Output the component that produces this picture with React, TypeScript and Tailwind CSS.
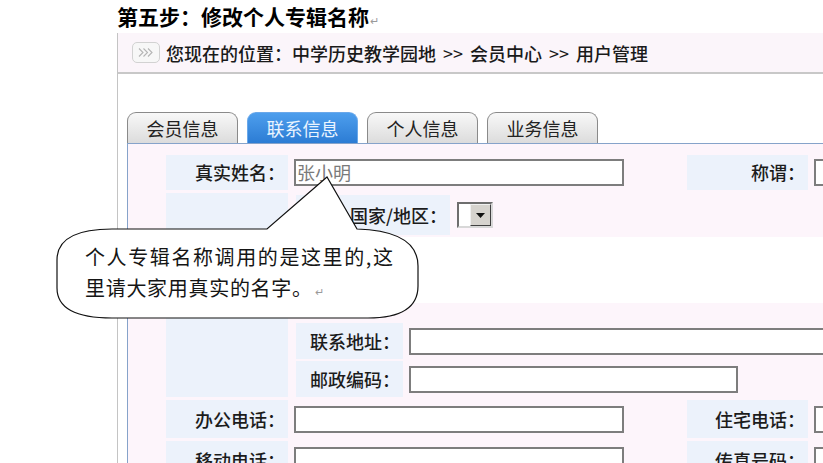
import React from "react";

const labelCell =
  "flex shrink-0 items-center justify-end whitespace-nowrap bg-[#ecf2fb] pr-[3px] text-[18px] font-medium text-[#1c1c1c]";
const inputBox = "h-[27px] shrink-0 bg-white border-2 border-[#7d7d7d]";

function Tab({ label, active }: { label: string; active?: boolean }) {
  return (
    <div
      className={
        active
          ? "flex h-[31px] w-[111px] shrink-0 items-center justify-center rounded-t-[9px] border border-b-0 border-[#6aa8ea] bg-linear-to-b from-[#4d9eed] to-[#2c7cd4] text-[18px] text-[#eaf4ff]"
          : "flex h-[31px] w-[111px] shrink-0 items-center justify-center rounded-t-[9px] border border-b-0 border-[#8a8a8a] bg-linear-to-b from-[#f8f8f8] to-[#dcdcdc] text-[18px] text-[#222]"
      }
    >
      {label}
    </div>
  );
}

function FormRow({ label, label2 }: { label: string; label2: string }) {
  return (
    <div className="flex h-[38px]">
      <div className={labelCell + " w-[122px]"}>{label}</div>
      <div className="flex w-[399px] shrink-0 items-center pl-[6px]">
        <div className={inputBox + " h-[26px] w-[330px]"} />
      </div>
      <div className={labelCell + " w-[121px]"}>{label2}</div>
      <div className="flex shrink-0 items-center pl-[6px]">
        <div className={inputBox + " h-[26px] w-[200px]"} />
      </div>
    </div>
  );
}

function SelectBox() {
  return (
    <div className="flex h-[26px] w-[36px] shrink-0 border-2 border-t-[#6e6e6e] border-l-[#6e6e6e] border-r-[#d8d8d8] border-b-[#d8d8d8] bg-white">
      <div className="w-[11px]" />
      <div className="flex flex-1 items-center justify-center border border-t-[#f0f0f0] border-l-[#f0f0f0] border-r-[#404040] border-b-[#404040] bg-[#d6d3ce]">
        <svg width="9" height="5" viewBox="0 0 9 5">
          <path d="M0 0 L9 0 L4.5 5 Z" fill="#111" />
        </svg>
      </div>
    </div>
  );
}

export default function App() {
  return (
    <div className="relative h-[463px] w-[823px] overflow-hidden bg-white font-['Noto_Sans_CJK_SC',sans-serif] text-[#111]">
      {/* document heading */}
      <div className="h-[33px] pl-[117px] text-[21px] font-bold leading-[33px] text-black">
        第五步：修改个人专辑名称
        <span className="ml-[1px] text-[11px] font-normal text-[#9a9a9a]">↵</span>
      </div>

      {/* embedded screenshot */}
      <div className="ml-[117px] h-[430px] w-[900px] border-l border-[#c4c4c4]">
        {/* breadcrumb */}
        <div className="flex h-[41px] items-center border-b-2 border-[#c8c8c8] bg-[#fbf5fa] pl-[14px]">
          <div className="flex h-[21px] w-[28px] shrink-0 items-center justify-center rounded-[5px] border border-[#d2d2d2] bg-[#f7f7f7]">
            <svg width="16" height="9" viewBox="0 0 16 9" fill="none" stroke="#b4b4b4" strokeWidth="1.1">
              <path d="M1 0.5 L5 4.5 L1 8.5" />
              <path d="M5.5 0.5 L9.5 4.5 L5.5 8.5" />
              <path d="M10 0.5 L14 4.5 L10 8.5" />
            </svg>
          </div>
          <div className="ml-[6px] whitespace-nowrap text-[18px] font-medium leading-none text-[#1a1a1a]">
            您现在的位置：中学历史教学园地
            <span className="mx-[7px] font-normal">&gt;&gt;</span>
            会员中心
            <span className="mx-[7px] font-normal">&gt;&gt;</span>
            用户管理
          </div>
        </div>

        {/* tabs */}
        <div className="flex gap-[9px] pl-[9px] pt-[38px]">
          <Tab label="会员信息" />
          <Tab label="联系信息" active />
          <Tab label="个人信息" />
          <Tab label="业务信息" />
        </div>

        {/* panel */}
        <div className="ml-[9px] h-[400px] border-l border-t border-[#86a3ca] bg-[#fdf5fb] pl-[38px] pt-[11px]">
          <div className="flex flex-col gap-[3px]">
            {/* row 1 */}
            <div className="flex h-[35px]">
              <div className={labelCell + " w-[122px]"}>真实姓名：</div>
              <div className="flex w-[399px] shrink-0 items-center pl-[6px]">
                <div className={inputBox + " w-[330px] pl-[1px] text-[18px] leading-[23px] text-[#7a7a7a]"}>
                  张小明
                </div>
              </div>
              <div className={labelCell + " w-[121px]"}>称谓：</div>
              <div className="flex shrink-0 items-center pl-[6px]">
                <div className={inputBox + " w-[200px]"} />
              </div>
            </div>

            {/* address block */}
            <div className="flex h-[204px]">
              <div className="w-[122px] shrink-0 bg-[#ecf2fb]" />
              <div className="flex flex-1 flex-col gap-[2px] pl-[8px] pt-[2px]">
                <div className="flex h-[40px]">
                  <div className={labelCell + " w-[154px]"}>国家/地区：</div>
                  <div className="flex shrink-0 items-center pl-[7px]">
                    <SelectBox />
                  </div>
                </div>
                <div className="-ml-[8px] h-[66px] bg-white" />
                <div className="h-[16px]" />
                <div className="flex h-[36px]">
                  <div className={labelCell + " w-[107px]"}>联系地址：</div>
                  <div className="flex shrink-0 items-center pl-[6px]">
                    <div className={inputBox + " h-[26px] w-[600px]"} />
                  </div>
                </div>
                <div className="flex h-[36px]">
                  <div className={labelCell + " w-[107px]"}>邮政编码：</div>
                  <div className="flex shrink-0 items-center pl-[6px]">
                    <div className={inputBox + " h-[26px] w-[329px]"} />
                  </div>
                </div>
              </div>
            </div>

            <FormRow label="办公电话：" label2="住宅电话：" />
            <FormRow label="移动电话：" label2="传真号码：" />
          </div>
        </div>
      </div>

      {/* callout bubble */}
      <svg
        className="pointer-events-none absolute left-0 top-0"
        width="823"
        height="463"
        viewBox="0 0 823 463"
      >
        <path
          d="M112 229 L267 229 L327 177 L357 229 Q418 231 418 266 L418 286 Q418 318 368 318 L112 318 Q57 318 57 288 L57 260 Q57 229 112 229 Z"
          fill="#fff"
          stroke="#111"
          strokeWidth="1.2"
        />
      </svg>
      <div className="absolute left-[85px] top-[241px] whitespace-nowrap text-[20px] leading-[31px] text-[#151515]">
        <div className="tracking-[1.6px]">个人专辑名称调用的是这里的,这</div>
        <div className="tracking-[0.7px]">
          里请大家用真实的名字。
          <span className="ml-[2px] text-[11px] tracking-normal text-[#9a9a9a]">↵</span>
        </div>
      </div>
    </div>
  );
}
